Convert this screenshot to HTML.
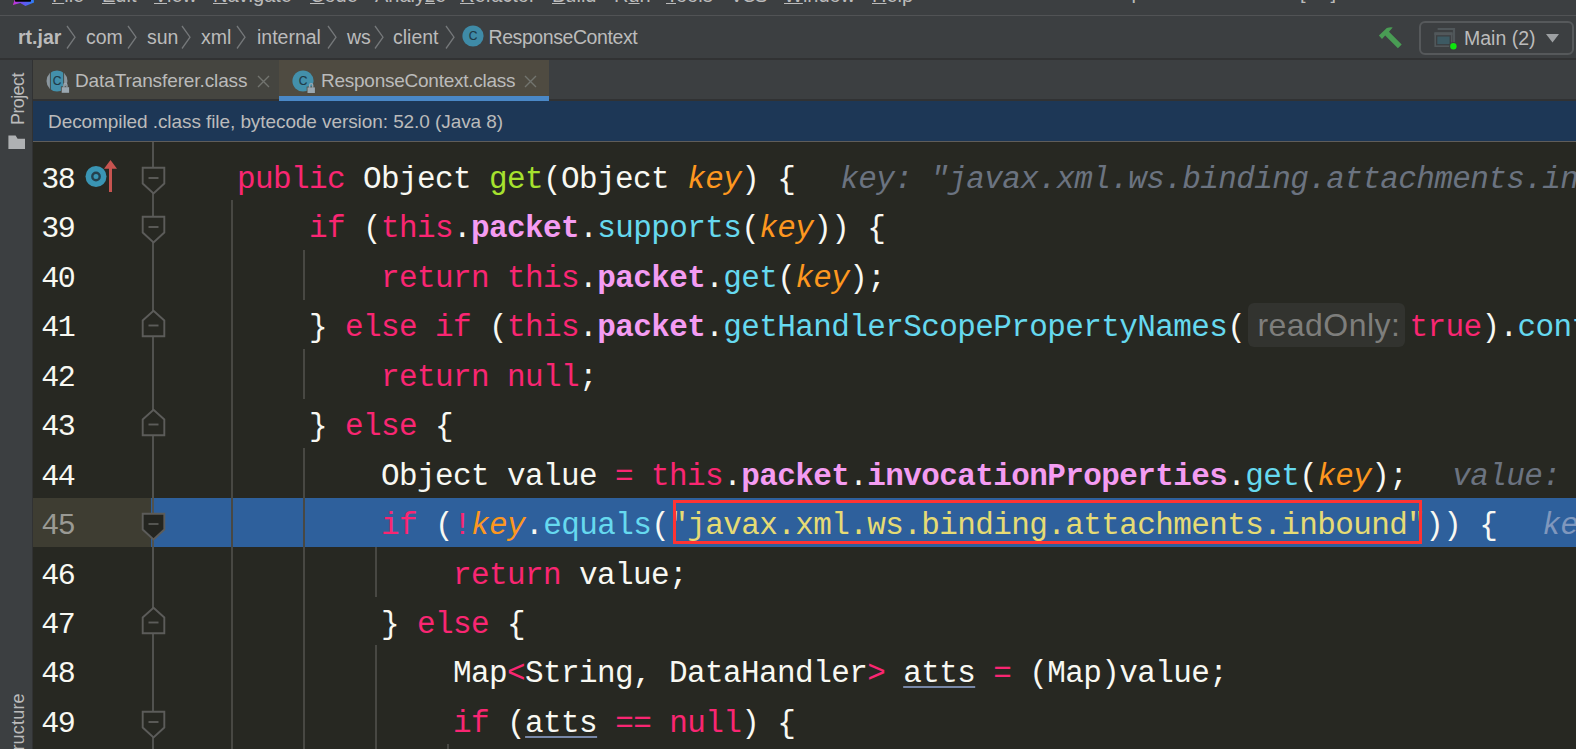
<!DOCTYPE html>
<html lang="en">
<head>
<meta charset="utf-8">
<title>ResponseContext.class</title>
<style>
*{margin:0;padding:0;box-sizing:border-box}
html,body{width:1576px;height:749px;overflow:hidden;background:#3c3f41}
body{position:relative;font-family:"Liberation Sans",sans-serif;color:#bbbbbb}
.abs{position:absolute;white-space:pre}
/* menu */
#menu{position:absolute;left:0;top:0;width:1576px;height:15px;background:#3c3f41;overflow:hidden}
#menu span{position:absolute;top:-17.1px;font-size:20px;line-height:24px;color:#bbbbbb;white-space:pre}
#menu u{text-decoration:underline;text-underline-offset:1.1px;text-decoration-thickness:1px}
#menusep{position:absolute;left:0;top:15px;width:1576px;height:1px;background:#515355}
/* nav bar */
#nav{position:absolute;left:0;top:16px;width:1576px;height:42px;background:#3c3f41}
#nav .t{position:absolute;top:9px;font-size:19.5px;line-height:24px;color:#bbbbbb;white-space:pre}
#nav .b{font-weight:bold}
#nav svg.sep{position:absolute;top:9px}
#navline{position:absolute;left:0;top:58px;width:1576px;height:2px;background:#313233}
/* left strip */
#strip{position:absolute;left:0;top:60px;width:32px;height:689px;background:#3c3f41}
#stripline{position:absolute;left:32px;top:60px;width:1px;height:689px;background:#313233}
.vtext{position:absolute;transform-origin:0 0;transform:rotate(-90deg);font-size:18px;line-height:22px;white-space:pre;color:#bbbbbb}
/* tabs */
#tabs{position:absolute;left:33px;top:60px;width:1543px;height:39px;background:#3c3f41;z-index:2}
.tab{position:absolute;top:0;height:39px}
.tab .lbl{position:absolute;top:10px;letter-spacing:-0.25px;font-size:19px;line-height:22px;color:#bbbbbb;white-space:pre}
#tabline{position:absolute;left:33px;top:99px;width:1543px;height:2px;background:#313233}
/* banner */
#banner{position:absolute;left:33px;top:101px;width:1543px;height:40px;background:#1d3756}
#banner .lbl{position:absolute;left:15px;top:10px;letter-spacing:-0.08px;font-size:19px;line-height:22px;color:#bbbbbb;white-space:pre}
#bannerline{position:absolute;left:33px;top:141px;width:1543px;height:1px;background:#5f5d5a}
/* editor */
#ed{position:absolute;left:33px;top:142px;width:1543px;height:607px;background:#272822;overflow:hidden;
 font-family:"Liberation Mono",monospace;font-size:31px;letter-spacing:-0.6px;color:#f8f8f2}
.ln{position:absolute;left:0;width:1543px;height:50px;line-height:50px;white-space:pre}
.ln .n{position:absolute;left:8.2px;top:3px;color:#f8f8f2;font-size:30px;letter-spacing:-1.5px}
.ln .c{position:absolute;left:132px;top:3px}
.k{color:#f92672}.m{color:#a6e22e}.p{color:#fd971f;font-style:italic}.f{color:#f49cf2;font-weight:bold}
.cl{color:#66d9ef}.s{color:#e6db74}.d{color:#6b7380;font-style:italic}.u{text-decoration:underline;text-decoration-color:#7888a8;text-decoration-thickness:2px;text-underline-offset:3.5px}
.guide{position:absolute;width:2px;margin-left:-1px;background:#484843}
.gap{display:inline-block;width:45px}
.inlay{display:inline-block;font-family:"Liberation Sans",sans-serif;font-size:32px;letter-spacing:0.45px;color:#7e7e7c;background:#32332f;border-radius:6px;height:43.5px;line-height:45px;vertical-align:top;position:relative;top:0px;margin:0 4px 0 2.7px;padding:0 0 0 9.5px;width:157.5px;text-align:left}
.ln.sel{height:49px}
.ln.sel::before{content:"";position:absolute;left:0;top:0;width:118px;height:49px;background:#3e3d32}
.ln.sel::after{content:"";position:absolute;left:118px;top:0;width:1425px;height:49px;background:#2e609c;z-index:0}
.ln.sel .n{color:#9a9a94;z-index:2}
.ln.sel .c{z-index:2}
.ln.sel .d{color:#7f97bd}
.foldline{position:absolute;left:119px;top:0;width:2px;height:607px;background:#51524f;z-index:1}
.fm{position:absolute;left:108px;z-index:2}
.guide{z-index:1}
#redbox{position:absolute;left:640px;top:358px;width:749px;height:44px;border:3px solid #ff3333;z-index:4}
</style>
</head>
<body>
<div id="menu">
<svg style="position:absolute;left:10px;top:0" width="28" height="8" viewBox="10 0 28 8"><defs><linearGradient id="lg" x1="0" y1="0" x2="1" y2="0"><stop offset="0" stop-color="#d32fd6"/><stop offset="0.45" stop-color="#6a50ee"/><stop offset="1" stop-color="#2a80f5"/></linearGradient></defs><path d="M14.6 0L12.9 5.1L20.3 2.9L25.4 6.1L34 2.6L33.8 0Z" fill="url(#lg)"/><rect x="15" y="-2" width="16" height="3.8" rx="0.8" fill="#000"/></svg>
<span style="left:52px"><u>F</u>ile</span>
<span style="left:102px"><u>E</u>dit</span>
<span style="left:154px"><u>V</u>iew</span>
<span style="left:213px"><u>N</u>avigate</span>
<span style="left:310px"><u>C</u>ode</span>
<span style="left:375px">Analy<u>z</u>e</span>
<span style="left:460px"><u>R</u>efactor</span>
<span style="left:552px"><u>B</u>uild</span>
<span style="left:614px">R<u>u</u>n</span>
<span style="left:666px"><u>T</u>ools</span>
<span style="left:730px;letter-spacing:-1.6px">VCS</span>
<span style="left:784px"><u>W</u>indow</span>
<span style="left:872px"><u>H</u>elp</span>
<span style="left:1096px;top:-19.6px">ResponseContext.class</span>
<span style="left:1300px;top:-19.6px;letter-spacing:0.2px">[ws]</span>
</div>
<div id="menusep"></div>
<div id="nav">
<span class="t b" style="left:18px">rt.jar</span>
<svg class="sep" style="left:66px" width="12" height="24" viewBox="0 0 12 24"><path d="M1 1 L9 12.2 L1 23.5" fill="none" stroke="#75787a" stroke-width="1.3"/></svg>
<span class="t" style="left:86px">com</span>
<svg class="sep" style="left:127px" width="12" height="24" viewBox="0 0 12 24"><path d="M1 1 L9 12.2 L1 23.5" fill="none" stroke="#75787a" stroke-width="1.3"/></svg>
<span class="t" style="left:147px">sun</span>
<svg class="sep" style="left:181px" width="12" height="24" viewBox="0 0 12 24"><path d="M1 1 L9 12.2 L1 23.5" fill="none" stroke="#75787a" stroke-width="1.3"/></svg>
<span class="t" style="left:201px">xml</span>
<svg class="sep" style="left:236px" width="12" height="24" viewBox="0 0 12 24"><path d="M1 1 L9 12.2 L1 23.5" fill="none" stroke="#75787a" stroke-width="1.3"/></svg>
<span class="t" style="left:257px">internal</span>
<svg class="sep" style="left:327px" width="12" height="24" viewBox="0 0 12 24"><path d="M1 1 L9 12.2 L1 23.5" fill="none" stroke="#75787a" stroke-width="1.3"/></svg>
<span class="t" style="left:347px">ws</span>
<svg class="sep" style="left:374px" width="12" height="24" viewBox="0 0 12 24"><path d="M1 1 L9 12.2 L1 23.5" fill="none" stroke="#75787a" stroke-width="1.3"/></svg>
<span class="t" style="left:393px">client</span>
<svg class="sep" style="left:445px" width="12" height="24" viewBox="0 0 12 24"><path d="M1 1 L9 12.2 L1 23.5" fill="none" stroke="#75787a" stroke-width="1.3"/></svg>
<svg style="position:absolute;left:459px;top:6px" width="28" height="28" viewBox="0 0 28 28"><circle cx="14" cy="14" r="10.6" fill="#3f8ba7"/><text x="14" y="18.1" text-anchor="middle" font-family="Liberation Sans, sans-serif" font-size="12" fill="#1f3a48" stroke="#1f3a48" stroke-width="0.15">C</text></svg>
<span class="t" style="left:488.5px;letter-spacing:-0.42px">ResponseContext</span>
<svg style="position:absolute;left:1370px;top:4px" width="100" height="36" viewBox="1370 20 100 36"><path d="M1378.9 35.5L1386.8 28.1Q1390 27 1392.7 27.5L1389 31.7L1401.7 44.4L1397.9 48.2L1385.2 35.5L1382 39Z" fill="#499c54"/><path d="M1437.6 29H1454V43.8" fill="none" stroke="#50575a" stroke-width="2.2"/><rect x="1435.2" y="33.2" width="16.5" height="13" fill="#3c3f41" stroke="#52585b" stroke-width="1.6"/><rect x="1434.4" y="32.4" width="18.1" height="2.8" fill="#52585b"/><rect x="1437.3" y="36.5" width="12.3" height="7.6" fill="#3d5a63"/><circle cx="1453.4" cy="46.3" r="4.2" fill="#3c3f41"/><circle cx="1453.4" cy="46.3" r="3.2" fill="#0ee60e"/></svg>
<div style="position:absolute;left:1419px;top:5px;width:154.5px;height:33.5px;border:2px solid #56595b;border-radius:6px"></div>
<span class="t" style="left:1464px;top:10px">Main (2)</span>
<svg style="position:absolute;left:1546px;top:17.5px" width="13" height="9" viewBox="0 0 13 9"><path d="M0 0h13l-6.5 8.5z" fill="#9da0a2"/></svg>
</div>
<div id="navline"></div>
<div id="strip">
<span class="vtext" style="left:7.4px;top:65px;letter-spacing:-0.6px">Project</span>
<svg style="position:absolute;left:8px;top:74.5px" width="18" height="15" viewBox="0 0 18 15"><path d="M0.4 0.5h7.2l2 3.3h7.4v10.2H0.4z" fill="#afb1b3"/></svg>
<span class="vtext" style="left:7.4px;top:708px;letter-spacing:0.2px">Structure</span>
</div>
<div id="stripline"></div>
<div id="tabs">
<div class="tab" style="left:0;width:246px;background:#454540"><svg style="position:absolute;left:11px;top:8px" width="28" height="28" viewBox="0 0 28 28"><defs><clipPath id="cc1"><circle cx="13" cy="13" r="10.5"/></clipPath></defs><g clip-path="url(#cc1)"><rect x="0" y="0" width="5.9" height="28" fill="#8b979f"/><rect x="20.1" y="0" width="8" height="28" fill="#8b979f"/><rect x="6.8" y="0" width="12.4" height="28" fill="#4390ab"/></g><text x="13" y="17.1" text-anchor="middle" font-family="Liberation Sans, sans-serif" font-size="12" fill="#1f3a48" stroke="#1f3a48" stroke-width="0.15">C</text><rect x="16.9" y="18.4" width="9" height="7.2" fill="#454540"/><path d="M19.849999999999998 19.5v-2.6a1.55 1.55 0 0 1 3.1 0v2.6" fill="none" stroke="#9aa7b0" stroke-width="1.3"/><rect x="17.7" y="19.2" width="7.4" height="5.6" fill="#9aa7b0"/></svg><span class="lbl" style="left:42px;letter-spacing:-0.11px">DataTransferer.class</span><svg style="position:absolute;left:224px;top:14.5px" width="13" height="13" viewBox="0 0 13 13"><path d="M1 1l11 11M12 1L1 12" stroke="#72746f" stroke-width="1.4" fill="none"/></svg></div>
<div class="tab" style="left:246px;width:270px;height:41px;background:#4f4b41"><svg style="position:absolute;left:11px;top:8px" width="28" height="28" viewBox="0 0 28 28"><circle cx="13" cy="13" r="10.6" fill="#4390ab"/><text x="13" y="17.1" text-anchor="middle" font-family="Liberation Sans, sans-serif" font-size="12" fill="#1f3a48" stroke="#1f3a48" stroke-width="0.15">C</text><rect x="16.7" y="18.6" width="9" height="7" fill="#4f4b41"/><path d="M19.65 19.7v-2.6a1.55 1.55 0 0 1 3.1 0v2.6" fill="none" stroke="#9aa7b0" stroke-width="1.3"/><rect x="17.5" y="19.4" width="7.4" height="5.6" fill="#9aa7b0"/></svg><span class="lbl" style="left:42px">ResponseContext.class</span><svg style="position:absolute;left:245px;top:14.5px" width="13" height="13" viewBox="0 0 13 13"><path d="M1 1l11 11M12 1L1 12" stroke="#72746f" stroke-width="1.4" fill="none"/></svg><div style="position:absolute;left:0;bottom:0;width:270px;height:5px;background:#4a88c7"></div></div>
</div>
<div id="tabline"></div>
<div id="banner"><span class="lbl">Decompiled .class file, bytecode version: 52.0 (Java 8)</span></div>
<div id="bannerline"></div>
<div id="ed">
<div class="foldline"></div>
<div class="guide" style="left:199px;top:58px;height:549px"></div>
<div class="guide" style="left:271px;top:108px;height:50px"></div>
<div class="guide" style="left:271px;top:207px;height:50px"></div>
<div class="guide" style="left:271px;top:306px;height:301px"></div>
<div class="guide" style="left:343px;top:405px;height:50px"></div>
<div class="guide" style="left:343px;top:503px;height:104px"></div>
<div class="guide" style="left:415px;top:602px;height:5px"></div>
<svg class="fm" style="top:24px" width="26" height="30" viewBox="0 0 26 30"><path d="M1.7 1.7H23.3V17.5L12.5 27.5L1.7 17.5Z" fill="#272822" stroke="#5c5c5a" stroke-width="1.9"/><path d="M7.5 12H17.5" stroke="#5c5c5a" stroke-width="1.9"/></svg>
<svg class="fm" style="top:73px" width="26" height="30" viewBox="0 0 26 30"><path d="M1.7 1.7H23.3V17.5L12.5 27.5L1.7 17.5Z" fill="#272822" stroke="#5c5c5a" stroke-width="1.9"/><path d="M7.5 12H17.5" stroke="#5c5c5a" stroke-width="1.9"/></svg>
<svg class="fm" style="top:568px" width="26" height="30" viewBox="0 0 26 30"><path d="M1.7 1.7H23.3V17.5L12.5 27.5L1.7 17.5Z" fill="#272822" stroke="#5c5c5a" stroke-width="1.9"/><path d="M7.5 12H17.5" stroke="#5c5c5a" stroke-width="1.9"/></svg>
<svg class="fm" style="top:167px" width="26" height="30" viewBox="0 0 26 30"><path d="M12.5 1.8L23.3 11.5V27.3H1.7V11.5Z" fill="#272822" stroke="#5c5c5a" stroke-width="1.9"/><path d="M7.5 16.5H17.5" stroke="#5c5c5a" stroke-width="1.9"/></svg>
<svg class="fm" style="top:266px" width="26" height="30" viewBox="0 0 26 30"><path d="M12.5 1.8L23.3 11.5V27.3H1.7V11.5Z" fill="#272822" stroke="#5c5c5a" stroke-width="1.9"/><path d="M7.5 16.5H17.5" stroke="#5c5c5a" stroke-width="1.9"/></svg>
<svg class="fm" style="top:464px" width="26" height="30" viewBox="0 0 26 30"><path d="M12.5 1.8L23.3 11.5V27.3H1.7V11.5Z" fill="#272822" stroke="#5c5c5a" stroke-width="1.9"/><path d="M7.5 16.5H17.5" stroke="#5c5c5a" stroke-width="1.9"/></svg>
<div class="ln" style="top:10px"><span class="n">38</span><span class="c">    <span class="k">public</span> Object <span class="m">get</span>(Object <span class="p">key</span>) {<span class="gap"></span><span class="d">key: &quot;javax.xml.ws.binding.attachments.inbound&quot;</span></span></div>
<div class="ln" style="top:59px"><span class="n">39</span><span class="c">        <span class="k">if</span> (<span class="k">this</span>.<span class="f">packet</span>.<span class="cl">supports</span>(<span class="p">key</span>)) {</span></div>
<div class="ln" style="top:109px"><span class="n">40</span><span class="c">            <span class="k">return</span> <span class="k">this</span>.<span class="f">packet</span>.<span class="cl">get</span>(<span class="p">key</span>);</span></div>
<div class="ln" style="top:158px"><span class="n">41</span><span class="c">        } <span class="k">else</span> <span class="k">if</span> (<span class="k">this</span>.<span class="f">packet</span>.<span class="cl">getHandlerScopePropertyNames</span>(<span class="inlay">readOnly:</span><span class="k">true</span>).<span class="cl">contains</span>(<span class="p">key</span>)) {</span></div>
<div class="ln" style="top:208px"><span class="n">42</span><span class="c">            <span class="k">return</span> <span class="k">null</span>;</span></div>
<div class="ln" style="top:257px"><span class="n">43</span><span class="c">        } <span class="k">else</span> {</span></div>
<div class="ln" style="top:307px"><span class="n">44</span><span class="c">            Object value <span class="k">=</span> <span class="k">this</span>.<span class="f">packet</span>.<span class="f">invocationProperties</span>.<span class="cl">get</span>(<span class="p">key</span>);<span class="gap"></span><span class="d">value: null</span></span></div>
<div class="ln sel" style="top:356px"><span class="n">45</span><span class="c">            <span class="k">if</span> (<span class="k">!</span><span class="p">key</span>.<span class="cl">equals</span>(<span class="s">&quot;javax.xml.ws.binding.attachments.inbound&quot;</span>)) {<span class="gap"></span><span class="d">key: &quot;javax.xml.ws.binding.attachments.inbound&quot;</span></span></div>
<div class="ln" style="top:406px"><span class="n">46</span><span class="c">                <span class="k">return</span> value;</span></div>
<div class="ln" style="top:455px"><span class="n">47</span><span class="c">            } <span class="k">else</span> {</span></div>
<div class="ln" style="top:504px"><span class="n">48</span><span class="c">                Map<span class="k">&lt;</span>String, DataHandler<span class="k">&gt;</span> <span class="u">atts</span> <span class="k">=</span> (Map)value;</span></div>
<div class="ln" style="top:554px"><span class="n">49</span><span class="c">                <span class="k">if</span> (<span class="u">atts</span> <span class="k">==</span> <span class="k">null</span>) {</span></div>
<svg style="position:absolute;left:50px;top:15px;z-index:3" width="36" height="36" viewBox="0 0 36 36"><circle cx="13" cy="19.5" r="10.5" fill="#3a95b4"/><circle cx="13" cy="19.5" r="3.7" fill="none" stroke="#24404e" stroke-width="2.4"/><path d="M27.5 3L34 11.8H29V35H26V11.8H21Z" fill="#c75450"/></svg>
<svg class="fm" style="z-index:3;top:370px" width="26" height="30" viewBox="0 0 26 30"><path d="M1.7 1.7H23.3V17.5L12.5 27.5L1.7 17.5Z" fill="#242520" stroke="#5c5c5a" stroke-width="1.9"/><path d="M7.5 12H17.5" stroke="#6a6a68" stroke-width="1.4"/></svg>
<div id="redbox"></div>
</div>
</body>
</html>
